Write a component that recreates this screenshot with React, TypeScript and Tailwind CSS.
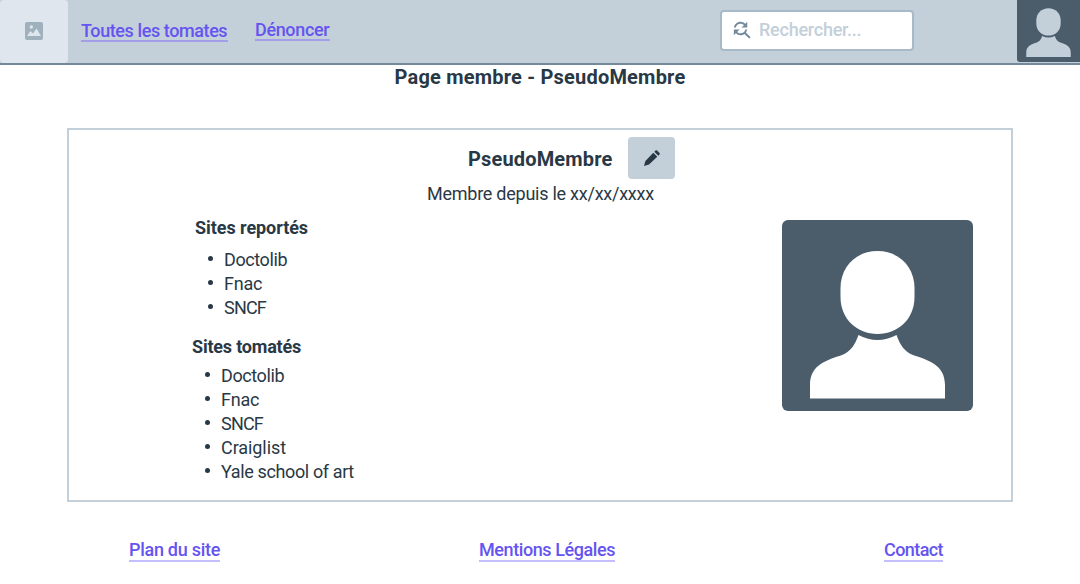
import type { ReactNode } from "react";
import { MdFindReplace } from "react-icons/md";

function TextLink({ className, children }: { className: string; children: ReactNode }) {
  return (
    <a
      href="#"
      className={`block h-6 whitespace-nowrap border-b-2 text-lg font-medium text-[#6554f0] ${className}`}
    >
      {children}
    </a>
  );
}

function Silhouette({ className }: { className: string }) {
  return (
    <svg viewBox="0 0 191 191" className={className} fill="currentColor" aria-hidden="true">
      <path d="M95.500 31C117 31 132.500 47 132.500 68V77C132.500 99 116 114 95.500 114S58.500 99 58.500 77V68C58.500 47 74 31 95.500 31Z" />
      <path d="M76.500 115Q95.500 125 114.500 115C118 125 123 132 131 135C145 140 163 144 163 165V178.500H28V165C28 144 46 140 60 135C68 132 73 125 76.500 115Z" />
    </svg>
  );
}

function ImageIcon() {
  return (
    <svg viewBox="0 0 18 18" className="mr-px mb-px size-[18px]" aria-hidden="true">
      <path
        fill="#9fb1bd"
        fillRule="evenodd"
        d="M2 0H16Q18 0 18 2V16Q18 18 16 18H2Q0 18 0 16V2Q0 0 2 0ZM2 14H16L11.500 6.500L8 11.500L5.500 9ZM6.300 3.300A1.700 1.700 0 1 0 6.300 6.700A1.700 1.700 0 1 0 6.300 3.300Z"
      />
    </svg>
  );
}

function Pencil() {
  return (
    <svg viewBox="0 0 16 16" className="size-4" fill="#293845" aria-hidden="true">
      <path d="M9.300 2.700L13.300 6.700L5 14.600L0 16L1.400 11Z" />
      <path d="M10.300 1.700L11.500 .5Q12.300 -.2 13.100 .5L15.500 2.900Q16.200 3.700 15.500 4.500L14.300 5.700Z" />
    </svg>
  );
}

function SiteList({ items }: { items: { name: string; tracking: string }[] }) {
  return (
    <ul className="text-lg leading-6">
      {items.map(({ name, tracking }) => (
        <li key={name} className="flex h-6">
          <span className="mt-2 mr-[11px] size-[5px] rounded-full bg-[#293845]" />
          <span className={`whitespace-nowrap ${tracking}`}>{name}</span>
        </li>
      ))}
    </ul>
  );
}

const reported = [
  { name: "Doctolib", tracking: "tracking-[-0.4px]" },
  { name: "Fnac", tracking: "tracking-[-0.25px]" },
  { name: "SNCF", tracking: "tracking-[-0.8px]" },
];

const tomatoed = [
  ...reported,
  { name: "Craiglist", tracking: "tracking-[-0.08px]" },
  { name: "Yale school of art", tracking: "tracking-[-0.37px]" },
];

export default function App() {
  return (
    <div className="flex h-[584px] w-[1080px] flex-col overflow-hidden bg-white font-['Roboto',sans-serif] text-[#293845]">
      <header className="flex h-[65px] shrink-0 border-b-2 border-[#748a9b] bg-[#c3cfd9]">
        <div className="flex w-[68px] items-center justify-center rounded-sm bg-[#dfe6ee]">
          <ImageIcon />
        </div>
        <nav className="flex pl-[13px]">
          <TextLink className="mt-[18px] w-[147px] border-[#a49ee9] leading-[26px] tracking-[-0.41px]">Toutes les tomates</TextLink>
          <TextLink className="mt-[17px] ml-[27px] w-[75px] border-[#a49ee9] leading-[26px] tracking-[-0.35px]">Dénoncer</TextLink>
        </nav>
        <div className="mt-2.5 ml-auto flex h-[41px] w-[194px] items-center rounded-[4px] border-2 border-[#a8b9c7] bg-white pb-px pl-2">
          <MdFindReplace className="mb-px size-[23px] text-[#748a9b]" />
          <span className="ml-1.5 text-lg leading-6 font-medium tracking-[-0.24px] text-[#c3cfd9]">Rechercher...</span>
        </div>
        <div className="ml-[103px] h-[62px] w-[63px] overflow-hidden rounded-bl-[3px] bg-[#4b5c6b] text-[#c3cfd9]">
          <Silhouette className="mt-[-2px] size-[63px]" />
        </div>
      </header>

      <h1 className="h-6 shrink-0 text-center text-xl leading-6 font-bold tracking-[0.2px]">Page membre - PseudoMembre</h1>

      <main className="mt-[39px] ml-[67px] h-[374px] w-[946px] shrink-0 border-2 border-[#c3cfd9] pt-[7px]">
        <div className="flex h-[42px] pl-[398px]">
          <h2 className="mt-2.5 w-[161px] pl-px text-xl leading-6 font-bold tracking-[0.16px]">PseudoMembre</h2>
          <button className="flex h-[42px] w-[47px] items-center justify-center rounded-[4px] bg-[#c3cfd9]">
            <Pencil />
          </button>
        </div>
        <p className="mt-[3px] ml-[358px] text-lg leading-6 tracking-[-0.25px]">Membre depuis le xx/xx/xxxx</p>
        <div className="flex justify-between pr-[38px] pl-[123px]">
          <div className="mt-[10px]">
            <h3 className="pl-[3px] text-lg leading-6 font-bold tracking-[-0.06px]">Sites reportés</h3>
            <div className="mt-2 pl-4">
              <SiteList items={reported} />
            </div>
            <h3 className="mt-[15px] text-lg leading-6 font-bold tracking-[-0.2px]">Sites tomatés</h3>
            <div className="mt-[5px] pl-[13px]">
              <SiteList items={tomatoed} />
            </div>
          </div>
          <div className="mt-[14px] size-[191px] rounded-[6px] bg-[#4b5c6b] text-white">
            <Silhouette className="size-[191px]" />
          </div>
        </div>
      </main>

      <footer className="mt-9 flex pl-[129px]">
        <TextLink className="w-[91px] border-[#c6bfff] leading-6 tracking-[-0.28px]">Plan du site</TextLink>
        <TextLink className="ml-[259px] w-[136px] border-[#c6bfff] leading-6 tracking-[-0.42px]">Mentions Légales</TextLink>
        <TextLink className="ml-[269px] w-[59px] border-[#c6bfff] leading-6 tracking-[-0.58px]">Contact</TextLink>
      </footer>
    </div>
  );
}
